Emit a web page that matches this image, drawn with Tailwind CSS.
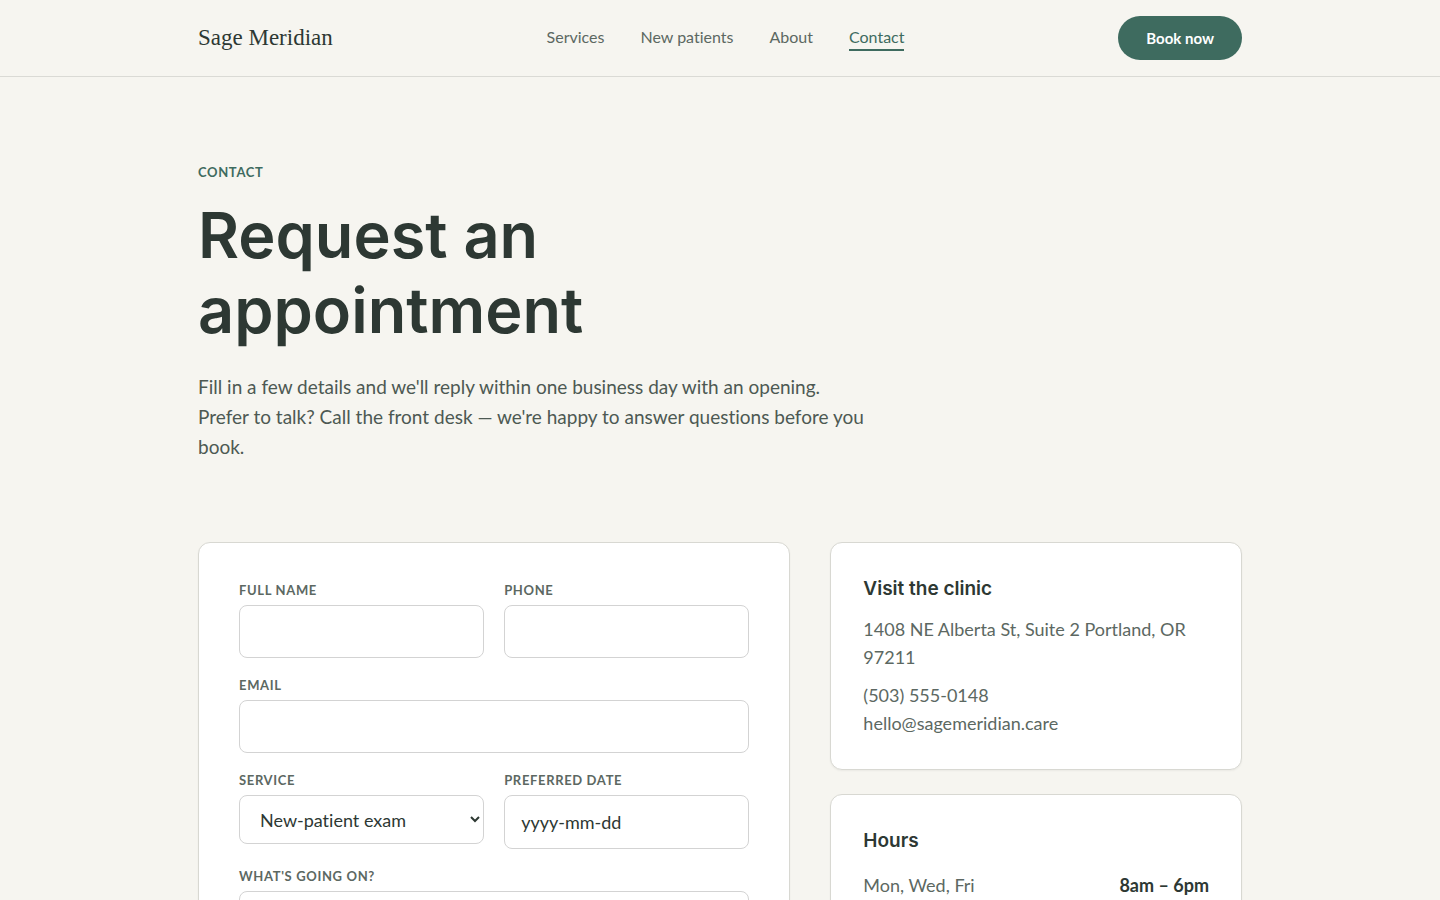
<!DOCTYPE html>
<html lang="en">

<head>
    <meta charset="UTF-8">
    <meta name="viewport" content="width=device-width, initial-scale=1.0">
    <title>Contact | Sage Meridian</title>
    <script src="https://cdn.jsdelivr.net/npm/@tailwindcss/browser@4"></script>
</head>

<body class="bg-[#f6f5f0] text-[#2d3833] font-['Lato',sans-serif] [font-variant-ligatures:none] min-h-screen">

    <header class="border-b border-[#dadad5]">
        <div class="max-w-[1140px] mx-auto px-12 py-4 flex items-center justify-between">
            <a href="#" class="font-['Liberation_Serif',serif] text-[23px] leading-7">Sage Meridian</a>
            <nav class="flex items-start gap-9 text-base leading-6 text-[#5c6862]">
                <a href="#">Services</a>
                <a href="#">New patients</a>
                <a href="#">About</a>
                <a href="#" class="text-[#3e6b5f] border-b-2 border-[#3e6b5f]">Contact</a>
            </nav>
            <button type="button" class="bg-[#3e6b5f] text-white text-[15px] leading-5 font-bold rounded-full px-7 py-3">Book now</button>
        </div>
    </header>

    <main class="max-w-[1140px] mx-auto px-12 pt-[85px] pb-20">

        <!-- Intro -->
        <section class="max-w-[670px]">
            <p class="text-[13px] leading-5 font-bold tracking-wider uppercase text-[#3e6b5f]">Contact</p>
            <h1 class="mt-4 max-w-[520px] font-['Inter',sans-serif] font-semibold text-[63px] leading-[75px] text-[#2d3833]">Request an appointment</h1>
            <p class="mt-6 text-[19px] leading-[30px] text-[#4d5953]">Fill in a few details and we'll reply within one business day with an opening. Prefer to talk? Call the front desk — we're happy to answer questions before you book.</p>
        </section>

        <div class="mt-20 grid grid-cols-[59fr_41fr] gap-10 items-start">

            <!-- Request form -->
            <form class="bg-white border border-[#d8d8d2] rounded-xl p-10 grid grid-cols-2 gap-5 items-start shadow-xs">
                <div>
                    <label for="name" class="block mb-[7px] text-[13px] leading-[15px] font-bold tracking-wider uppercase text-[#5c6862]">Full name</label>
                    <input id="name" type="text" class="block w-full h-[53px] px-4 text-lg border border-[#d3d3d3] rounded-lg">
                </div>
                <div>
                    <label for="phone" class="block mb-[7px] text-[13px] leading-[15px] font-bold tracking-wider uppercase text-[#5c6862]">Phone</label>
                    <input id="phone" type="tel" class="block w-full h-[53px] px-4 text-lg border border-[#d3d3d3] rounded-lg">
                </div>
                <div class="col-span-2">
                    <label for="email" class="block mb-[7px] text-[13px] leading-[15px] font-bold tracking-wider uppercase text-[#5c6862]">Email</label>
                    <input id="email" type="email" class="block w-full h-[53px] px-4 text-lg border border-[#d3d3d3] rounded-lg">
                </div>
                <div>
                    <label for="service" class="block mb-[7px] text-[13px] leading-[15px] font-bold tracking-wider uppercase text-[#5c6862]">Service</label>
                    <select id="service" class="block w-full h-[49px] pl-4 text-lg bg-white border border-[#d3d3d3] rounded-lg">
                        <option>New-patient exam</option>
                    </select>
                </div>
                <div>
                    <label for="date" class="block mb-[7px] text-[13px] leading-[15px] font-bold tracking-wider uppercase text-[#5c6862]">Preferred date</label>
                    <input id="date" type="text" placeholder="yyyy-mm-dd" class="block w-full h-[54px] px-4 text-lg placeholder:text-[#2d3833] border border-[#d3d3d3] rounded-lg">
                </div>
                <div class="col-span-2">
                    <label for="message" class="block mb-[7px] text-[13px] leading-[15px] font-bold tracking-wider uppercase text-[#5c6862]">What's going on?</label>
                    <textarea id="message" rows="4" class="block w-full px-4 py-3 text-lg border border-[#d3d3d3] rounded-lg"></textarea>
                </div>
            </form>

            <!-- Clinic details -->
            <aside class="flex flex-col gap-6 text-lg leading-7 text-[#5c6862]">
                <section class="bg-white border border-[#d8d8d2] rounded-xl p-8 shadow-xs">
                    <h2 class="font-['Inter',sans-serif] font-semibold text-[19px] leading-7 text-[#2d3833]">Visit the clinic</h2>
                    <p class="mt-3">1408 NE Alberta St, Suite 2 Portland, OR 97211</p>
                    <p class="mt-[10px]">
                        <a href="tel:5035550148">(503) 555-0148</a><br>
                        <a href="mailto:hello@sagemeridian.care">hello@sagemeridian.care</a>
                    </p>
                </section>
                <section class="bg-white border border-[#d8d8d2] rounded-xl p-8 shadow-xs">
                    <h2 class="font-['Inter',sans-serif] font-semibold text-[19px] leading-7 text-[#2d3833]">Hours</h2>
                    <dl class="mt-4 flex justify-between">
                        <dt>Mon, Wed, Fri</dt>
                        <dd class="font-bold text-[#2d3833]">8am – 6pm</dd>
                    </dl>
                </section>
            </aside>
        </div>
    </main>

</body>

</html>
